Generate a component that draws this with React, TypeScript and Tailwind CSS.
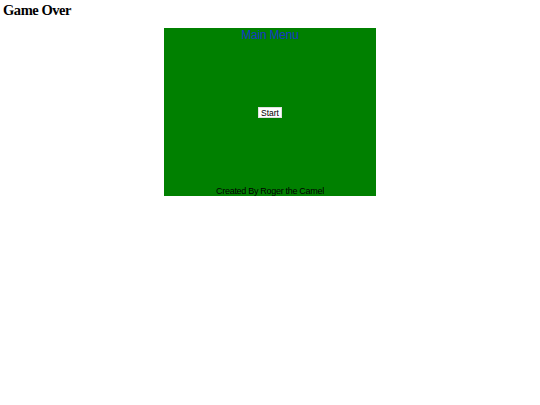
export default function App() {
  return (
    <div className="w-[540px] h-[405px] bg-white">
      <div
        className="pl-[3px] pt-[2px] h-[28px] text-[14.5px] leading-[17px] tracking-[-0.45px] font-bold text-black"
        style={{ fontFamily: '"Liberation Serif", "Times New Roman", serif' }}
      >
        Game Over
      </div>
      <div
        className="mx-auto w-[212px] h-[168px] bg-[#008000] flex flex-col items-center"
        style={{ fontFamily: '"Liberation Sans", Arial, sans-serif' }}
      >
        <div className="text-[12px] leading-[13px] pt-[1px] tracking-[-0.2px] text-[#1836c8]">Main Menu</div>
        <div className="flex-1 flex items-center justify-center pb-[3px]">
          <button className="bg-white text-black text-[8.5px] leading-[10px] px-[2px] py-0 h-[11px] border border-[#e0e0e0]">
            Start
          </button>
        </div>
        <div className="text-[9px] leading-[10px] tracking-[-0.3px] text-black">Created By Roger the Camel</div>
      </div>
    </div>
  );
}
